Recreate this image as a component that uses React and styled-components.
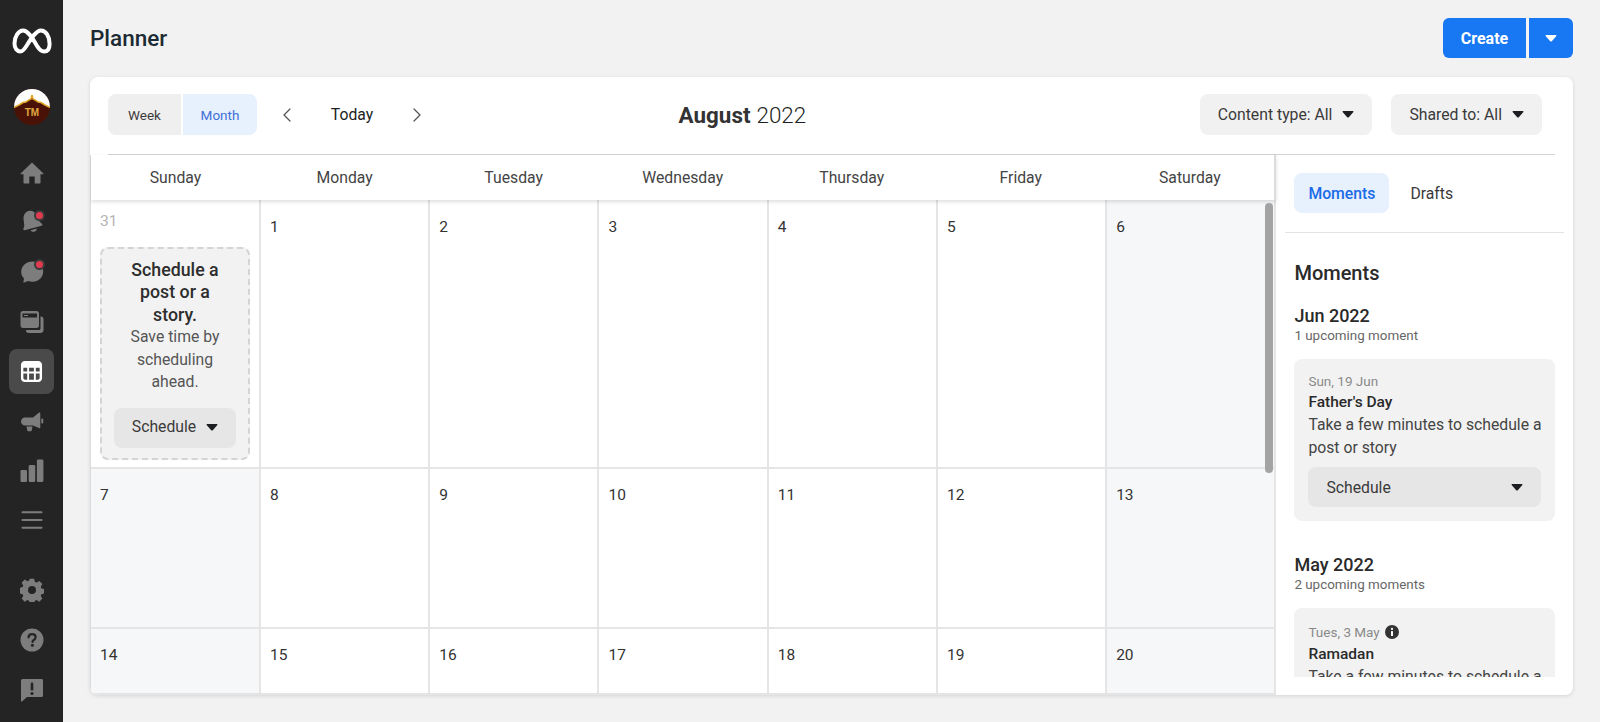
import React from 'react';
import styled, { createGlobalStyle } from 'styled-components';
import { ChevronLeft, ChevronRight } from 'lucide-react';

const GlobalStyle = createGlobalStyle`
  html, body {
    margin: 0;
    height: 100%;
    overflow: hidden;
    background: #f2f2f2;
    font-family: Roboto, "Liberation Sans", sans-serif;
    color: #1c1e21;
  }
  * { box-sizing: border-box; }
`;

const Page = styled.div`
  display: flex;
  width: 1600px;
  height: 722px;
  overflow: hidden;
`;

const Sidebar = styled.nav`
  width: 63px;
  flex: none;
  background: #242424;
  display: flex;
  flex-direction: column;
  align-items: center;
  padding-top: 18px;
  padding-bottom: 10px;
`;

const LogoSlot = styled.div`
  height: 46px;
  display: flex;
  align-items: center;
  justify-content: center;
  margin-bottom: 25px;
`;

const AvatarSlot = styled.div`
  height: 36px;
  margin-bottom: 25px;
`;

const NavItem = styled.div`
  position: relative;
  width: 45px;
  height: 45px;
  flex: none;
  margin-bottom: ${(p) => p.$gap ?? 4.7}px;
  display: flex;
  align-items: center;
  justify-content: center;
  border-radius: 8px;
  background: ${(p) => (p.$active ? '#4a4a4a' : 'transparent')};
  color: ${(p) => (p.$active ? '#fff' : '#7d7d7d')};
`;

const Dot = styled.span`
  position: absolute;
  top: 10px;
  right: 9px;
  width: 11px;
  height: 11px;
  border-radius: 50%;
  background: #e23a4e;
  border: 2px solid #3a3a3a;
`;

const SidebarBottom = styled.div`
  margin-top: auto;
  display: flex;
  flex-direction: column;
  align-items: center;
`;

const Main = styled.main`
  flex: 1;
  min-width: 0;
  display: flex;
  flex-direction: column;
  padding: 18px 27px 27px 27px;
`;

const TopBar = styled.header`
  display: flex;
  align-items: center;
  justify-content: space-between;
  height: 40px;
  margin-bottom: 19px;
`;

const PageTitle = styled.h1`
  margin: 0;
  font-size: 22.5px;
  font-weight: 500;
  color: #1c2b33;
`;

const SplitButton = styled.div`
  display: flex;
  gap: 3px;
`;

const PrimaryButton = styled.button`
  height: 40px;
  width: ${(p) => p.$w}px;
  border: none;
  border-radius: ${(p) => (p.$side === 'left' ? '6px 0 0 6px' : '0 6px 6px 0')};
  background: #1877f2;
  color: #fff;
  font: 700 16px Roboto, sans-serif;
  display: flex;
  align-items: center;
  justify-content: center;
  padding: 0;
`;

const Card = styled.section`
  flex: 1;
  min-height: 0;
  background: #fff;
  border-radius: 8px;
  box-shadow: 0 1px 4px rgba(0, 0, 0, 0.12);
  display: flex;
  flex-direction: column;
  overflow: hidden;
`;

const Toolbar = styled.div`
  height: 78px;
  flex: none;
  margin: 0 18px;
  padding: 17px 13px 0 0;
  border-bottom: 1px solid #d4d4d4;
  display: flex;
  align-items: flex-start;
`;

const Segments = styled.div`
  display: flex;
  gap: 2px;
`;

const Segment = styled.div`
  width: ${(p) => (p.$active ? 74 : 73)}px;
  height: 41px;
  display: flex;
  align-items: center;
  justify-content: center;
  font-size: 13.5px;
  background: ${(p) => (p.$active ? '#e7f0fd' : '#efefef')};
  color: ${(p) => (p.$active ? '#3f6fd8' : '#3c3c3c')};
  border-radius: ${(p) => (p.$active ? '0 8px 8px 0' : '8px 0 0 8px')};
`;

const DateNav = styled.div`
  display: flex;
  align-items: center;
  height: 41px;
  margin-left: 18px;
  color: #555;
`;

const TodayLabel = styled.span`
  width: 106px;
  text-align: center;
  font-size: 15.75px;
  color: #1c1e21;
`;

const MonthTitle = styled.div`
  flex: 1;
  height: 41px;
  display: flex;
  align-items: center;
  justify-content: center;
  gap: 6px;
  font-size: 22.4px;
  font-weight: 300;
  color: #1c1e21;
  padding-right: 144px;
  b { font-weight: 700; color: #333; }
`;

const FilterRow = styled.div`
  display: flex;
  gap: 19px;
`;

const GreyButton = styled.div`
  height: ${(p) => p.$h ?? 41}px;
  display: flex;
  align-items: center;
  justify-content: ${(p) => (p.$spread ? 'space-between' : 'center')};
  gap: 10px;
  padding: 0 ${(p) => p.$pad ?? 18}px;
  background: ${(p) => p.$bg ?? '#f1f1f1'};
  border-radius: 8px;
  font-size: 15.75px;
  color: #3a3a3a;
`;

const Body = styled.div`
  flex: 1;
  min-height: 0;
  display: flex;
`;

const CalendarPane = styled.div`
  width: 1186.4px;
  flex: none;
  position: relative;
  display: flex;
  flex-direction: column;
  border-left: 1px solid #dcdcdc;
  min-height: 0;
`;

const DayHeader = styled.div`
  display: grid;
  grid-template-columns: repeat(7, 1fr);
  height: 45px;
  flex: none;
  position: relative;
  z-index: 2;
  background: #fff;
  border-right: 2px solid #dcdcdc;
  box-shadow: 0 2px 4px rgba(0, 0, 0, 0.13);
`;

const DayName = styled.div`
  display: flex;
  align-items: center;
  justify-content: center;
  font-size: 15.75px;
  color: #444;
`;

const Weeks = styled.div`
  flex: 1;
  min-height: 0;
  overflow: hidden;
  display: grid;
  grid-template-columns: repeat(7, 1fr);
  grid-template-rows: 269px 160px 160px;
  border-bottom: 2px solid #e4e4e4;
`;

const DayCell = styled.div`
  padding: ${(p) => p.$top}px 9px 0;
  border-right: 2px solid #e5e5e5;
  border-bottom: 2px solid #e5e5e5;
  background: ${(p) => (p.$weekend ? '#f6f7f9' : '#fff')};
`;

const DateNum = styled.div`
  font-size: 15.5px;
  line-height: 18px;
  color: ${(p) => (p.$muted ? '#b4b4b4' : '#333')};
`;

const Prompt = styled.div`
  margin-top: 17px;
  width: 150px;
  height: 213px;
  background: #f2f2f2;
  border: 2px dashed #d4d4d4;
  border-radius: 8px;
  padding: 9.5px 12px 0;
  text-align: center;
  font-size: 15.75px;
  line-height: 22.5px;
  color: #555;
`;

const PromptCopy = styled.div`
  padding: 0 15px;
`;

const PromptTitle = styled.div`
  font-size: 17.75px;
  font-weight: 500;
  color: #2d2d2d;
`;

const PromptButtonWrap = styled.div`
  margin-top: 14px;
`;

const ScrollThumb = styled.div`
  position: absolute;
  z-index: 3;
  top: 48px;
  right: 3px;
  width: 8px;
  height: 270px;
  border-radius: 4px;
  background: #a3a3a3;
`;

const RightPane = styled.aside`
  flex: 1;
  min-width: 0;
  display: flex;
  flex-direction: column;
  padding: 0 9px;
  min-height: 0;
`;

const Tabs = styled.div`
  display: flex;
  height: 78px;
  flex: none;
  padding: 18px 9px 0;
  gap: 7px;
  border-bottom: 1px solid #e2e2e2;
  align-items: flex-start;
`;

const Tab = styled.div`
  height: 40px;
  padding: 0 14px;
  display: flex;
  align-items: center;
  font-size: 15.75px;
  border-radius: 8px;
  font-weight: ${(p) => (p.$active ? 500 : 400)};
  color: ${(p) => (p.$active ? '#1a6be8' : '#3a3a3a')};
  background: ${(p) => (p.$active ? '#e7f0fd' : 'transparent')};
`;

const MomentsScroll = styled.div`
  height: 444px;
  flex: none;
  overflow: hidden;
  padding: 28px 9px 0;
`;

const MomentsHeading = styled.h2`
  margin: 0 0 20px;
  font-size: 20px;
  line-height: 24px;
  font-weight: 500;
  color: #2a2a2a;
`;

const MonthHeading = styled.h3`
  margin: 0;
  font-size: 18px;
  line-height: 22px;
  font-weight: 500;
  color: #2a2a2a;
`;

const MonthSub = styled.div`
  font-size: 13.4px;
  line-height: 18px;
  color: #666;
  margin-bottom: 14px;
`;

const MomentCard = styled.div`
  background: #f2f2f2;
  border-radius: 8px;
  padding: 12px 14px 14px;
  margin-bottom: 33px;
`;

const MomentDate = styled.div`
  display: flex;
  align-items: center;
  gap: 5px;
  padding: ${(p) => (p.$withIcon ? '2px 0' : '0 0 1px')};
  font-size: 13.5px;
  line-height: 20px;
  color: #8a8a8a;
`;

const MomentName = styled.div`
  font-size: 15.5px;
  line-height: 20px;
  font-weight: 500;
  color: #2a2a2a;
  margin-bottom: 1px;
`;

const MomentText = styled.div`
  font-size: 15.75px;
  line-height: 23px;
  color: #444;
  margin: 0 -4px 8px 0;
`;

const Caret = ({ color = '#1c1e21' }) => (
  <svg width="12" height="7" viewBox="0 0 12 8" fill={color} preserveAspectRatio="none">
    <path d="M.6 1.2C.3.6.7 0 1.3 0h9.4c.6 0 1 .6.7 1.2L6.8 7a1 1 0 0 1-1.6 0z" />
  </svg>
);

const MetaLogo = () => (
  <svg width="40" height="26" viewBox="0 0 40 26" fill="none" stroke="#fff" strokeWidth="4" strokeLinecap="round" strokeLinejoin="round">
    <path d="M8.500 23.500c-3.600 0-6-3.200-6-8 0-7 4-13 8.600-13 5.400 0 10.600 10 14.400 16.200 2.200 3.400 4.200 4.800 6.500 4.800 3.800 0 5.600-3.200 5.600-7.600 0-7.400-3.600-13.400-8.800-13.400-5 0-10.600 9.500-14.400 15.500-2.300 3.600-3.800 5.500-5.900 5.500z" />
  </svg>
);

const Avatar = () => (
  <svg width="36" height="36" viewBox="0 0 36 36">
    <defs>
      <clipPath id="avatar-clip"><circle cx="18" cy="18" r="18" /></clipPath>
    </defs>
    <g clipPath="url(#avatar-clip)">
      <rect width="36" height="36" fill="#4a1206" />
      <path d="M0 0h36v18l-5-2-4-2.500-3-.5-3-2-2-1-1-4-1 4-2 1-3 2-3 .5-4 2.500-5 2z" fill="#fff" />
      <path d="M0 18.500l5-2.500 4-2.500 3-.5 3-2 2-1 1-4 1 4 2 1 3 2 3 .5 4 2.500 5 2.500" fill="none" stroke="#e0a526" strokeWidth="1.500" />
      <text x="18" y="27" textAnchor="middle" fontFamily="Liberation Sans, sans-serif" fontSize="10" fontWeight="700" fill="#e0a940">TM</text>
    </g>
  </svg>
);

const HomeIcon = () => (
  <svg width="24" height="24" viewBox="0 0 24 24" fill="currentColor">
    <path d="M12 1.500 .8 12.300c-.4.400-.1 1 .4 1H3.500v8.200c0 .6.400 1 1 1h4.800v-7h5.400v7h4.800c.6 0 1-.4 1-1v-8.200h2.300c.5 0 .8-.6.400-1z" />
  </svg>
);

const BellIcon = () => (
  <svg width="24" height="26" viewBox="0 0 24 26" fill="currentColor">
    <g transform="rotate(-15 12 13)">
      <path d="M11.500 1.500c-4 .2-6.500 3.200-7 7l-.8 5.500c-.2 1.400-1 2.400-1.800 3.400-.5.700-.2 1.600.8 1.600h17.600c1 0 1.500-.9.900-1.700-1-1.300-1.800-2.500-2.100-4L17.800 7c-.7-3.500-3-5.700-6.300-5.500z" />
      <path d="M8.500 20.500h6.500c-.4 1.400-1.700 2.500-3.200 2.500s-2.900-1-3.300-2.500z" />
    </g>
  </svg>
);

const ChatIcon = () => (
  <svg width="24" height="24" viewBox="0 0 24 24" fill="currentColor">
    <path d="M12.500 1.500C6.200 1.500 1.200 6 1.200 11.800c0 2.600 1 5 2.800 6.800l-.6 3.400c-.1.500.3.800.8.600l3.900-1.500c1.300.5 2.800.7 4.400.7 6.200 0 10.700-4.600 10.700-10.300S18.700 1.500 12.500 1.500z" />
  </svg>
);

const PagesIcon = () => (
  <svg width="24" height="24" viewBox="0 0 24 24" fill="currentColor">
    <path d="M20.500 6.500h.5c1.400 0 2.500 1.100 2.500 2.500v11c0 1.700-1.300 3-3 3H8.500c-1.400 0-2.500-1-2.500-2.500v-.5h13c.8 0 1.500-.7 1.500-1.500z" />
    <path fillRule="evenodd" d="M3 1h13.500c1.500 0 2.500 1 2.500 2.500v12c0 1.500-1 2.500-2.500 2.500H3c-1.500 0-2.500-1-2.500-2.500v-12C.500 2 1.500 1 3 1zM2.500 3.500v4h14.500v-4zM4 5h4v1H4z" />
  </svg>
);

const CalendarIcon = () => (
  <svg width="23" height="23" viewBox="0 0 24 24" fill="currentColor">
    <path fillRule="evenodd" d="M5 1h14c2.200 0 4 1.800 4 4v14c0 2.200-1.800 4-4 4H5c-2.200 0-4-1.800-4-4V5c0-2.200 1.800-4 4-4zM3.500 8v4h4V8zm6 0v4h5V8zm7 0v4h4V8zm-13 6v4.500c0 1 .7 2 2 2h2V14zm6 0v6.500h5V14zm7 0v6.500h2c1.300 0 2-1 2-2V14z" />
  </svg>
);

const MegaphoneIcon = () => (
  <svg width="24" height="24" viewBox="0 0 24 24" fill="currentColor">
    <path d="M19 3.500c.7-.3 1.300.2 1.300.9v13.800c0 .7-.6 1.200-1.300.9L13 16.500H5C2.700 16.500 1 14.800 1 12.500s1.700-4 4-4h8z" />
    <rect x="21.300" y="9.500" width="1.900" height="5" rx=".9" />
    <path d="M6.500 17.500h6l-.8 4c-.1.500-.5.800-1 .8H8.300c-.5 0-.9-.3-1-.8z" />
  </svg>
);

const BarsIcon = () => (
  <svg width="24" height="24" viewBox="0 0 24 24" fill="currentColor">
    <rect x="0.500" y="11" width="6.500" height="12" rx="1.200" />
    <rect x="8.700" y="6" width="6.500" height="17" rx="1.200" />
    <rect x="16.900" y="0.500" width="6.500" height="22.500" rx="1.200" />
  </svg>
);

const MenuIcon = () => (
  <svg width="24" height="24" viewBox="0 0 24 24" fill="currentColor">
    <rect x="1.500" y="3.200" width="21" height="2" rx="1" />
    <rect x="1.500" y="11" width="21" height="2" rx="1" />
    <rect x="1.500" y="18.800" width="21" height="2" rx="1" />
  </svg>
);

const GearIcon = () => (
  <svg width="24" height="24" viewBox="0 0 24 24" fill="currentColor">
    <path fillRule="evenodd" d="M9.800.8h4.400l.7 3.100 1.700.7 2.700-1.700 3.100 3.100-1.700 2.700.7 1.700 3.100.7v4.400l-3.100.7-.7 1.700 1.700 2.700-3.100 3.100-2.700-1.700-1.700.7-.7 3.100H9.800l-.7-3.100-1.700-.7-2.700 1.700-3.100-3.100 1.700-2.700-.7-1.700-3.100-.7V9.800l3.100-.7.7-1.700-1.700-2.700 3.100-3.100 2.700 1.700 1.700-.7zM12 8a4 4 0 1 0 0 8 4 4 0 0 0 0-8z" />
  </svg>
);

const HelpIcon = () => (
  <svg width="24" height="24" viewBox="0 0 24 24">
    <circle cx="12" cy="12" r="11.500" fill="currentColor" />
    <path d="M8.500 9.300c.2-2 1.700-3.100 3.600-3.100 2 0 3.500 1.200 3.500 3 0 1.400-.8 2.100-1.800 2.800-.9.600-1.300 1-1.300 2" fill="none" stroke="#242424" strokeWidth="2.200" strokeLinecap="round" />
    <circle cx="12.400" cy="17.300" r="1.500" fill="#242424" />
  </svg>
);

const ReportIcon = () => (
  <svg width="24" height="24" viewBox="0 0 24 24">
    <path d="M2.500 1h19c.8 0 1.500.7 1.500 1.500v15c0 .8-.7 1.500-1.500 1.500H7l-5 4.500c-.4.300-1 0-1-.5v-20C1 1.700 1.700 1 2.500 1z" fill="currentColor" />
    <rect x="10.700" y="4.500" width="2.600" height="8" rx="1.200" fill="#242424" />
    <circle cx="12" cy="15.500" r="1.600" fill="#242424" />
  </svg>
);

const InfoIcon = () => (
  <svg width="14" height="14" viewBox="0 0 14 14">
    <circle cx="7" cy="7" r="7" fill="#333" />
    <rect x="6" y="6" width="2" height="5" rx=".6" fill="#fff" />
    <circle cx="7" cy="3.900" r="1.100" fill="#fff" />
  </svg>
);

const days = ['Sunday', 'Monday', 'Tuesday', 'Wednesday', 'Thursday', 'Friday', 'Saturday'];
const dates = [31, 1, 2, 3, 4, 5, 6, 7, 8, 9, 10, 11, 12, 13, 14, 15, 16, 17, 18, 19, 20];

const cellTop = (n) => {
  if (n === 31) return 12;
  return n <= 6 ? 18 : 17;
};

export default function App() {
  return (
    <Page>
      <GlobalStyle />
      <Sidebar>
        <LogoSlot><MetaLogo /></LogoSlot>
        <AvatarSlot><Avatar /></AvatarSlot>
        <NavItem><HomeIcon /></NavItem>
        <NavItem><BellIcon /><Dot /></NavItem>
        <NavItem><ChatIcon /><Dot /></NavItem>
        <NavItem><PagesIcon /></NavItem>
        <NavItem $active><CalendarIcon /></NavItem>
        <NavItem><MegaphoneIcon /></NavItem>
        <NavItem><BarsIcon /></NavItem>
        <NavItem><MenuIcon /></NavItem>
        <SidebarBottom>
          <NavItem><GearIcon /></NavItem>
          <NavItem><HelpIcon /></NavItem>
          <NavItem $gap={0}><ReportIcon /></NavItem>
        </SidebarBottom>
      </Sidebar>
      <Main>
        <TopBar>
          <PageTitle>Planner</PageTitle>
          <SplitButton>
            <PrimaryButton $w={83} $side="left">Create</PrimaryButton>
            <PrimaryButton $w={44} $side="right"><Caret color="#fff" /></PrimaryButton>
          </SplitButton>
        </TopBar>
        <Card>
          <Toolbar>
            <Segments>
              <Segment>Week</Segment>
              <Segment $active>Month</Segment>
            </Segments>
            <DateNav>
              <ChevronLeft size={24} strokeWidth={1.25} />
              <TodayLabel>Today</TodayLabel>
              <ChevronRight size={24} strokeWidth={1.25} />
            </DateNav>
            <MonthTitle><b>August</b> 2022</MonthTitle>
            <FilterRow>
              <GreyButton>Content type: All <Caret /></GreyButton>
              <GreyButton>Shared to: All <Caret /></GreyButton>
            </FilterRow>
          </Toolbar>
          <Body>
            <CalendarPane>
              <DayHeader>
                {days.map((d) => <DayName key={d}>{d}</DayName>)}
              </DayHeader>
              <Weeks>
                {dates.map((n, i) => (
                  <DayCell key={n} $top={cellTop(n)} $weekend={n !== 31 && (i % 7 === 0 || i % 7 === 6)}>
                    <DateNum $muted={n === 31}>{n}</DateNum>
                    {n === 31 && (
                      <Prompt>
                        <PromptCopy>
                          <PromptTitle>Schedule a post or a story.</PromptTitle>
                          Save time by scheduling ahead.
                        </PromptCopy>
                        <PromptButtonWrap>
                          <GreyButton $h={40} $bg="#e6e6e6" $pad={10}>Schedule <Caret /></GreyButton>
                        </PromptButtonWrap>
                      </Prompt>
                    )}
                  </DayCell>
                ))}
              </Weeks>
              <ScrollThumb />
            </CalendarPane>
            <RightPane>
              <Tabs>
                <Tab $active>Moments</Tab>
                <Tab>Drafts</Tab>
              </Tabs>
              <MomentsScroll>
                <MomentsHeading>Moments</MomentsHeading>
                <MonthHeading>Jun 2022</MonthHeading>
                <MonthSub>1 upcoming moment</MonthSub>
                <MomentCard>
                  <MomentDate>Sun, 19 Jun</MomentDate>
                  <MomentName>Father's Day</MomentName>
                  <MomentText>Take a few minutes to schedule a post or story</MomentText>
                  <GreyButton $h={40} $bg="#e6e6e6" $spread>Schedule <Caret /></GreyButton>
                </MomentCard>
                <MonthHeading>May 2022</MonthHeading>
                <MonthSub>2 upcoming moments</MonthSub>
                <MomentCard>
                  <MomentDate $withIcon>Tues, 3 May <InfoIcon /></MomentDate>
                  <MomentName>Ramadan</MomentName>
                  <MomentText>Take a few minutes to schedule a post or story</MomentText>
                </MomentCard>
              </MomentsScroll>
            </RightPane>
          </Body>
        </Card>
      </Main>
    </Page>
  );
}
